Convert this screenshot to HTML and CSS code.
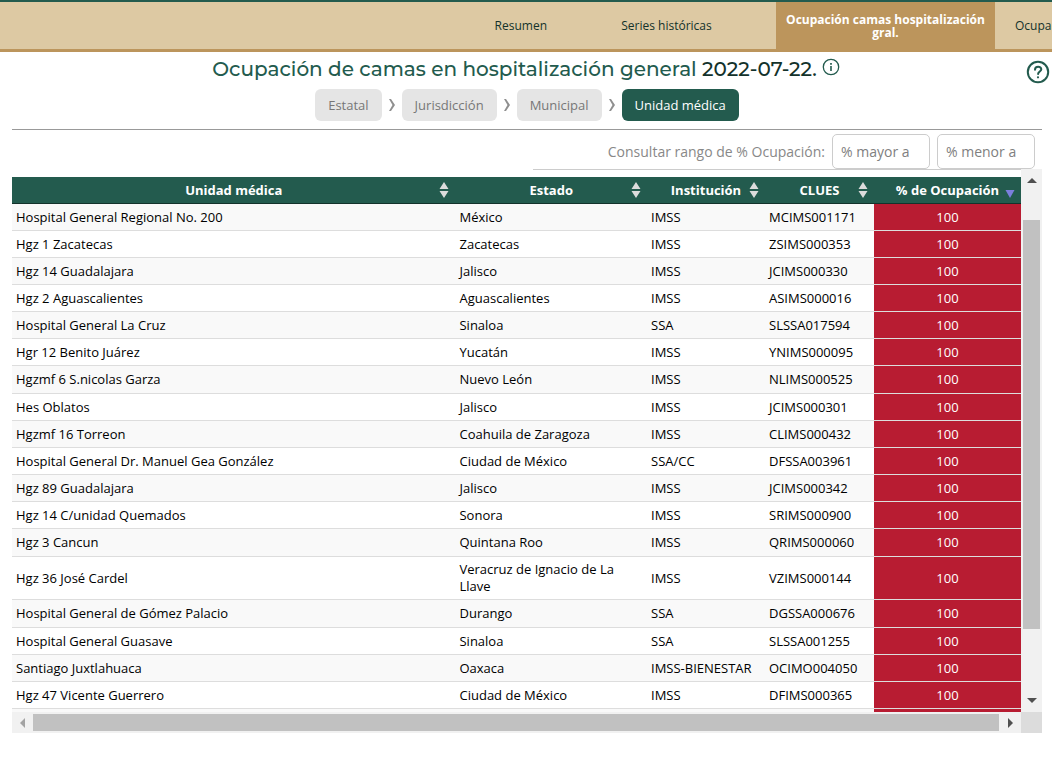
FILE: index.html
```html
<!DOCTYPE html>
<html lang="es">
<head>
<meta charset="utf-8">
<title>Ocupación de camas en hospitalización general</title>
<link rel="stylesheet" href="styles.css">
</head>
<body>
<svg class="defs" aria-hidden="true">
  <symbol id="sort" viewBox="0 0 10 18"><path d="M5 1 9.500 8H.5zM5 17 .5 10h9z" fill="#dcdcdc"/></symbol>
  <symbol id="chevron" viewBox="0 0 8 14"><path d="M1 1h2l4 6-4 6H1l3.500-6z" fill="#8f8f8f"/></symbol>
</svg>
<nav class="tabs">
  <a class="tab" href="#">Resumen</a>
  <a class="tab tab-wide" href="#">Series históricas</a>
  <a class="tab tab-wide tab-active" href="#">Ocupación camas hospitalización gral.</a>
  <a class="tab tab-cut" href="#">Ocupa</a>
</nav>
<main>
  <header class="heading">
    <h1>Ocupación de camas en hospitalización general <span>2022-07-22.</span></h1>
    <button class="icon-button info" aria-label="Información">
      <svg width="18" height="18" viewBox="0 0 18 18" fill="none" stroke="#235b4e"><circle cx="9" cy="9" r="7.700" stroke-width="1.300"/><path d="M9 8v5" stroke-width="1.600"/><path d="M9 5v1.700" stroke-width="1.700"/></svg>
    </button>
    <button class="icon-button help" aria-label="Ayuda">
      <svg width="24" height="24" viewBox="0 0 24 24" fill="none" stroke="#235b4e" stroke-width="2"><circle cx="12" cy="12" r="10.200"/><path d="M9 9.700c0-4 6.300-3.800 6.300-.4 0 2.200-3.200 2.200-3.200 4.700" stroke-linecap="round"/><circle cx="12" cy="17.300" r=".5" stroke-width="1.200"/></svg>
    </button>
  </header>
  <div class="levels">
    <button class="level">Estatal</button>
    <svg class="chevron"><use href="#chevron"/></svg>
    <button class="level">Jurisdicción</button>
    <svg class="chevron"><use href="#chevron"/></svg>
    <button class="level">Municipal</button>
    <svg class="chevron"><use href="#chevron"/></svg>
    <button class="level level-active">Unidad médica</button>
  </div>
  <section class="panel">
    <div class="filter">
      <label for="min">Consultar rango de % Ocupación:</label>
      <input id="min" type="text" placeholder="% mayor a">
      <input id="max" type="text" placeholder="% menor a" aria-label="% menor a">
    </div>
    <div class="frame">
      <div class="viewport">
        <div class="rule"></div>
        <table>
          <colgroup><col class="c-unit"><col class="c-state"><col class="c-inst"><col class="c-clues"><col class="c-pct"></colgroup>
          <thead><tr>
            <th><button class="sort">Unidad médica<svg><use href="#sort"/></svg></button></th>
            <th><button class="sort">Estado<svg><use href="#sort"/></svg></button></th>
            <th><button class="sort">Institución<svg><use href="#sort"/></svg></button></th>
            <th><button class="sort">CLUES<svg><use href="#sort"/></svg></button></th>
            <th><button class="sort">% de Ocupación<svg viewBox="0 0 10 18"><path d="M.5 9h9L5 17z" fill="#7b7fdd"/></svg></button></th>
          </tr></thead>
          <tbody>
            <tr><td>Hospital General Regional No. 200</td><td>México</td><td>IMSS</td><td>MCIMS001171</td><td>100</td></tr>
            <tr><td>Hgz 1 Zacatecas</td><td>Zacatecas</td><td>IMSS</td><td>ZSIMS000353</td><td>100</td></tr>
            <tr><td>Hgz 14 Guadalajara</td><td>Jalisco</td><td>IMSS</td><td>JCIMS000330</td><td>100</td></tr>
            <tr><td>Hgz 2 Aguascalientes</td><td>Aguascalientes</td><td>IMSS</td><td>ASIMS000016</td><td>100</td></tr>
            <tr><td>Hospital General La Cruz</td><td>Sinaloa</td><td>SSA</td><td>SLSSA017594</td><td>100</td></tr>
            <tr><td>Hgr 12 Benito Juárez</td><td>Yucatán</td><td>IMSS</td><td>YNIMS000095</td><td>100</td></tr>
            <tr><td>Hgzmf 6 S.nicolas Garza</td><td>Nuevo León</td><td>IMSS</td><td>NLIMS000525</td><td>100</td></tr>
            <tr><td>Hes Oblatos</td><td>Jalisco</td><td>IMSS</td><td>JCIMS000301</td><td>100</td></tr>
            <tr><td>Hgzmf 16 Torreon</td><td>Coahuila de Zaragoza</td><td>IMSS</td><td>CLIMS000432</td><td>100</td></tr>
            <tr><td>Hospital General Dr. Manuel Gea González</td><td>Ciudad de México</td><td>SSA/CC</td><td>DFSSA003961</td><td>100</td></tr>
            <tr><td>Hgz 89 Guadalajara</td><td>Jalisco</td><td>IMSS</td><td>JCIMS000342</td><td>100</td></tr>
            <tr><td>Hgz 14 C/unidad Quemados</td><td>Sonora</td><td>IMSS</td><td>SRIMS000900</td><td>100</td></tr>
            <tr><td>Hgz 3 Cancun</td><td>Quintana Roo</td><td>IMSS</td><td>QRIMS000060</td><td>100</td></tr>
            <tr><td>Hgz 36 José Cardel</td><td>Veracruz de Ignacio de La Llave</td><td>IMSS</td><td>VZIMS000144</td><td>100</td></tr>
            <tr><td>Hospital General de Gómez Palacio</td><td>Durango</td><td>SSA</td><td>DGSSA000676</td><td>100</td></tr>
            <tr><td>Hospital General Guasave</td><td>Sinaloa</td><td>SSA</td><td>SLSSA001255</td><td>100</td></tr>
            <tr><td>Santiago Juxtlahuaca</td><td>Oaxaca</td><td>IMSS-BIENESTAR</td><td>OCIMO004050</td><td>100</td></tr>
            <tr><td>Hgz 47 Vicente Guerrero</td><td>Ciudad de México</td><td>IMSS</td><td>DFIMS000365</td><td>100</td></tr>
            <tr><td></td><td></td><td></td><td></td><td></td></tr>
          </tbody>
        </table>
      </div>
      <div class="bar bar-v">
        <svg viewBox="0 0 21 21"><path d="M6 14h10l-5-5z" fill="#505050"/></svg>
        <div class="track"><div class="thumb"></div></div>
        <svg viewBox="0 0 21 21"><path d="M6 7h10l-5 5z" fill="#505050"/></svg>
      </div>
      <div class="bar bar-h">
        <svg viewBox="0 0 21 21"><path d="M13 6v10l-5-5z" fill="#a3a3a3"/></svg>
        <div class="track"><div class="thumb"></div></div>
        <svg viewBox="0 0 21 21"><path d="M8 6v10l5-5z" fill="#505050"/></svg>
      </div>
      <div class="corner"></div>
    </div>
  </section>
</main>
</body>
</html>
```
FILE: styles.css
```css
* { box-sizing: border-box; }
body { margin: 0; background: #fff; font-family: "Open Sans", "Noto Sans", sans-serif; font-size: 13px; overflow: hidden; }
button, input { font: inherit; }
button { border: 0; cursor: pointer; }
.defs { position: absolute; width: 0; height: 0; }

.tabs { display: flex; justify-content: flex-end; height: 52px; background: #ddc9a3; border-top: 2px solid #235b4e; border-bottom: 3px solid #bc955c; }
.tab { display: flex; align-items: center; justify-content: center; padding: 0 10px; color: #13322b; font-size: 12px; line-height: 13px; text-align: center; text-decoration: none; }
.tab-wide { width: 219px; }
.tab-active { background: #bc955c; color: #fff; font-weight: 700; }
.tab-cut { width: 57px; padding: 0 0 0 20px; justify-content: flex-start; }

.heading { position: relative; display: flex; justify-content: center; align-items: center; gap: 5px; height: 34px; }
h1 { margin: 0; font-family: Montserrat, "Open Sans", sans-serif; font-size: 20px; font-weight: 500; line-height: 34px; color: #235b4e; white-space: nowrap; }
h1 span { color: #13322b; }
.icon-button { display: flex; padding: 0; background: none; }
.info { margin-bottom: 4px; }
.help { position: absolute; right: 2px; top: 8px; }

.levels { display: flex; justify-content: center; align-items: center; gap: 6px; margin: 3px 0 8px; padding-left: 2px; }
.level { height: 32px; padding: 0 13px; border-radius: 6px; background: #e5e5e5; color: #777; }
.level-active { background: #235b4e; color: #fff; font-weight: 500; }
.chevron { width: 8px; height: 14px; }

.panel { margin: 0 10px 0 12px; border-top: 1px solid #999; }
.filter { display: flex; justify-content: flex-end; align-items: center; gap: 7px; padding: 4px 7px 0 0; color: #888; font-size: 14px; }
.filter input { width: 98px; height: 35px; padding: 0 8px; border: 1px solid #ccc; border-radius: 5px; background: #fff; color: #777; }
.filter input::placeholder { color: #808080; opacity: 1; }

.frame { display: grid; grid-template-columns: 1fr 21px; grid-template-rows: 543px 21px; }
.viewport { overflow: hidden; }
.rule { height: 8px; margin-left: 521px; border-top: 1px solid #ccc; }
table { width: 100%; table-layout: fixed; border-collapse: separate; border-spacing: 0; }
.c-unit { width: 44%; }
.c-state { width: 19%; }
.c-inst { width: 118px; }
.c-clues { width: 109px; }
.c-pct { width: 147px; }
th { height: 27px; padding: 0; background: #235b4e; border-bottom: 1px solid #13322b; }
.sort { display: grid; grid-template-columns: 1fr auto 1fr; align-items: center; width: 100%; height: 26px; padding: 0 6px; background: none; color: #fff; font-weight: 700; white-space: nowrap; }
.sort::before { content: ""; }
.sort svg { width: 10px; height: 18px; justify-self: end; }
td { height: 27px; padding: 4px; line-height: 17px; color: #000; border-bottom: 1px solid #ddd; }
tr:nth-child(7) td, tr:nth-child(13) td, tr:nth-child(15) td { height: 28px; }
tbody tr:nth-child(odd) { background: #f9f9f9; }
td:last-child { background: #b81c32; color: #fff; text-align: center; }

.bar { display: flex; background: #f1f1f1; }
.bar svg { width: 21px; height: 21px; flex: none; }
.bar-v { flex-direction: column; }
.track { flex: 1; display: flex; }
.thumb { background: #c1c1c1; }
.bar-v .thumb { width: 17px; height: 409px; margin: 30px 0 0 2px; }
.bar-h .thumb { flex: 1; margin: 2px 1px 2px 0; }
.corner { background: #dcdcdc; }
```
